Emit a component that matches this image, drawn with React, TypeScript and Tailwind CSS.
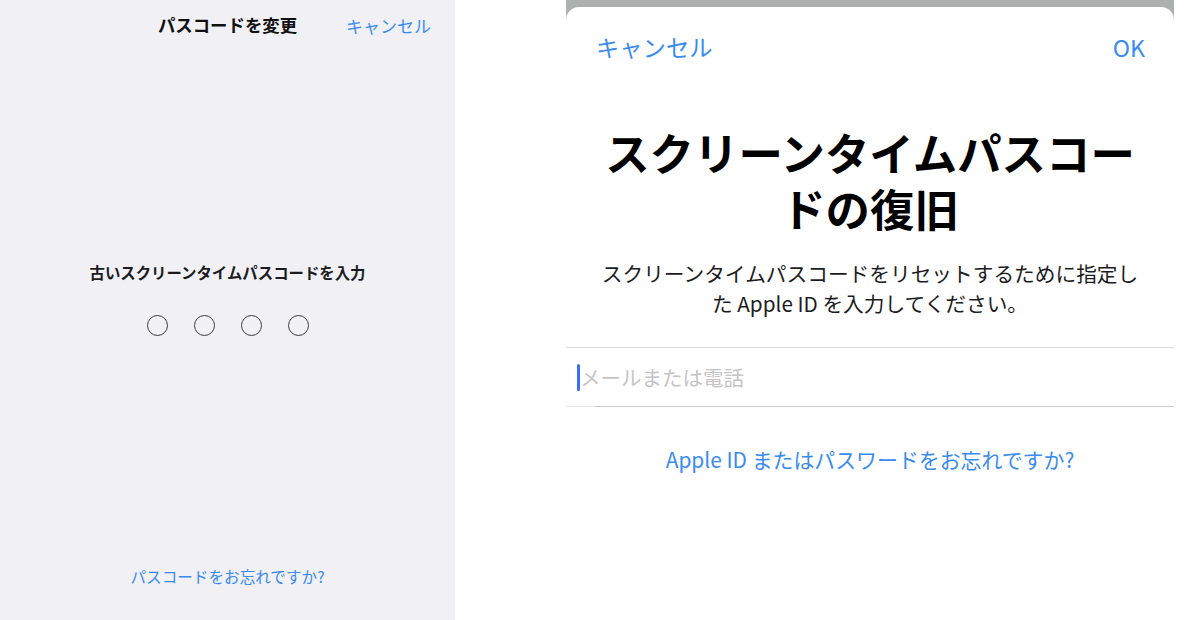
const jp = { fontFamily: '"Noto Sans CJK JP", "Noto Sans", sans-serif' };

function PasscodeDots() {
  return (
    <div className="mt-[32px] flex justify-center gap-[26px] pl-[1px]">
      {[0, 1, 2, 3].map((i) => (
        <div key={i} className="h-[21px] w-[21px] rounded-full border-[1.5px] border-[#3c3c3e]" />
      ))}
    </div>
  );
}

function ChangePasscode() {
  return (
    <div className="flex h-[620px] w-[455px] shrink-0 flex-col bg-[#f0f0f5]">
      <div className="grid h-[50px] grid-cols-[1fr_auto_1fr] items-center">
        <div />
        <div className="text-[17.4px] font-bold leading-none text-[#111]">パスコードを変更</div>
        <div className="justify-self-end pr-[24px] text-[17px] leading-none text-[#3a8bf0]">キャンセル</div>
      </div>
      <div className="mt-[211px] text-center text-[15.4px] font-bold leading-[22px] text-[#1c1c1e]">
        古いスクリーンタイムパスコードを入力
      </div>
      <PasscodeDots />
      <div className="mt-[229px] text-center text-[15.6px] leading-[22px] text-[#3a8bf0]">
        パスコードをお忘れですか?
      </div>
    </div>
  );
}

function RecoverySheet() {
  return (
    <div className="flex h-[620px] w-[608px] shrink-0 flex-col bg-[#aeb0af] pt-[7px]">
      <div className="flex flex-1 flex-col rounded-t-[13px] bg-white">
        <div className="flex h-[82px] items-center justify-between pl-[30px] pr-[29px] text-[23.3px] leading-none text-[#3a8bf0]">
          <span>キャンセル</span>
          <span>OK</span>
        </div>
        <h1 className="mt-[35px] px-[34px] text-center text-[44.4px] font-bold leading-[56px] text-black">
          スクリーンタイムパスコードの復旧
        </h1>
        <p className="mt-[22px] px-[28px] text-center text-[20.7px] leading-[30px] text-[#1c1c1e]">
          スクリーンタイムパスコードをリセットするために指定した Apple ID を入力してください。
        </p>
        <div className="mt-[29px] border-t border-[#dcdcdc]">
          <div className="flex h-[58px] items-center pl-[11px]">
            <div className="h-[27px] w-[3px] rounded-full bg-[#3b6ef5]" />
            <span className="text-[20.5px] leading-none text-[#c4c4c7]">メールまたは電話</span>
          </div>
          <div className="flex h-px">
            <div className="w-[29px] bg-[#e6e6e6]" />
            <div className="flex-1 bg-[#c8c8c8]" />
          </div>
        </div>
        <div className="mt-[37px] text-center text-[20.9px] leading-[30px] text-[#3a8bf0]">
          Apple ID またはパスワードをお忘れですか?
        </div>
      </div>
    </div>
  );
}

export default function App() {
  return (
    <div className="flex h-[620px] w-[1200px] overflow-hidden bg-white" style={jp}>
      <ChangePasscode />
      <div className="w-[111px] shrink-0" />
      <RecoverySheet />
    </div>
  );
}
